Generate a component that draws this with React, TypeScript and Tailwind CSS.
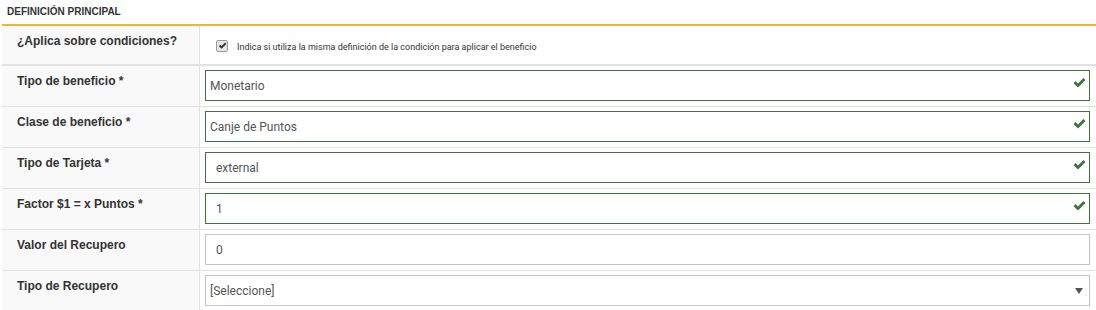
import React from 'react';

type Field = {
  label: string;
  value: string;
  state: 'success' | 'plain' | 'select';
  indent?: boolean;
};

const fields: Field[] = [
  { label: 'Tipo de beneficio *', value: 'Monetario', state: 'success' },
  { label: 'Clase de beneficio *', value: 'Canje de Puntos', state: 'success' },
  { label: 'Tipo de Tarjeta *', value: 'external', state: 'success', indent: true },
  { label: 'Factor $1 = x Puntos *', value: '1', state: 'success', indent: true },
  { label: 'Valor del Recupero', value: '0', state: 'plain', indent: true },
  { label: 'Tipo de Recupero', value: '[Seleccione]', state: 'select' },
];

const OkIcon = () => (
  <svg width="13" height="11" viewBox="0 0 13 11" className="absolute right-[3px] top-[6px]">
    <path d="M0.5 6.2 L2.6 4.1 L5 6.5 L10.4 1 L12.5 3.1 L5 10.5 Z" fill="#3c763d" />
  </svg>
);

const Row = ({ field }: { field: Field }) => {
  const border = field.state === 'success' ? 'border-[#3c763d]' : 'border-[#c4c4c4]';
  return (
    <div className="flex h-[41px] border-b border-[#e2e2e2]">
      <div className="w-[198px] shrink-0 bg-[#f9f9f9] border-r border-[#e2e2e2] pl-[15px] pt-[6px] text-[12px] font-bold text-[#333] font-['Liberation_Sans',Arial,sans-serif]">
        {field.label}
      </div>
      <div className="flex-1 pl-[5px] pr-[6px] pt-[4px]">
        <div className={`relative h-[31px] border ${border} bg-white flex items-center font-['Roboto',sans-serif] text-[12px] text-[#555] ${field.indent ? 'pl-[10px]' : 'pl-[4px]'}`}>
          <span>{field.value}</span>
          {field.state === 'success' && <OkIcon />}
          {field.state === 'select' && (
            <svg width="8" height="6" viewBox="0 0 8 6" className="absolute right-[6px] top-[12px]">
              <path d="M0 0 H8 L4 6 Z" fill="#555" />
            </svg>
          )}
        </div>
      </div>
    </div>
  );
};

export default function App() {
  return (
    <div className="w-[1096px] h-[310px] bg-white overflow-hidden">
      <div className="h-[24px] pl-[7px] pt-[4px] text-[10px] font-bold uppercase text-[#333] font-['Liberation_Sans',Arial,sans-serif]">
        Definición Principal
      </div>
      <div className="ml-[2px] border-t-2 border-[#f7b52c]">
        <div className="flex h-[40px] border-b-2 border-[#e2e2e2]">
          <div className="w-[198px] shrink-0 bg-[#f9f9f9] border-r border-[#e2e2e2] pl-[15px] pt-[6px] text-[12px] font-bold text-[#333] font-['Liberation_Sans',Arial,sans-serif]">
            ¿Aplica sobre condiciones?
          </div>
          <div className="flex-1 flex items-start pl-[16px] pt-[14px] gap-[9px]">
            <span className="w-[12px] h-[12px] rounded-[2px] border border-[#9a9a9a] bg-[#e6e6e6] flex items-center justify-center">
              <svg width="9" height="8" viewBox="0 0 9 8">
                <path d="M0.8 4.3 L2.3 2.8 L3.6 4.1 L7.2 0.6 L8.4 1.9 L3.6 6.8 Z" fill="#333" />
              </svg>
            </span>
            <span className="text-[9px] text-[#333] font-['Roboto',sans-serif] leading-[12px] pt-[1px]">
              Indica si utiliza la misma definición de la condición para aplicar el beneficio
            </span>
          </div>
        </div>
        {fields.map(f => (
          <Row key={f.label} field={f} />
        ))}
      </div>
    </div>
  );
}
